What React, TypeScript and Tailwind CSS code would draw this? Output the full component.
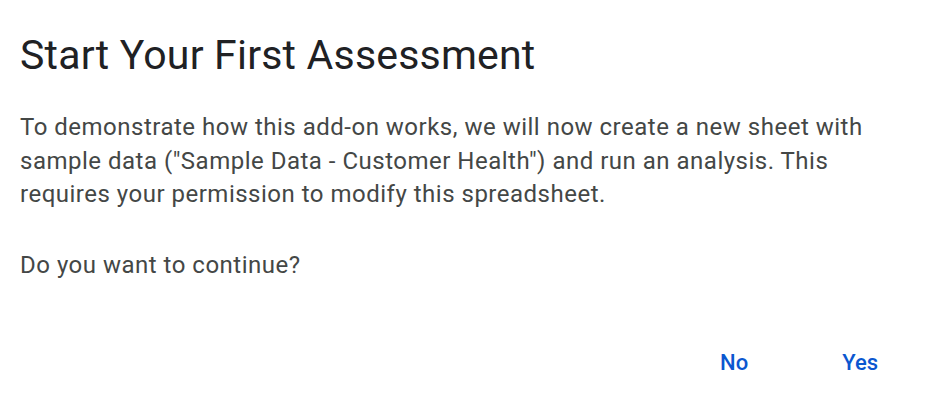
export default function App() {
  return (
    <div className="flex h-[415px] w-[930px] flex-col bg-white px-5 font-['Roboto',sans-serif]">
      <h1 className="mt-[29px] text-[41px] leading-[52px] font-normal tracking-[0.2px] text-[#202124]">
        Start Your First Assessment
      </h1>
      <div className="mt-[30px] text-[24px] leading-[33.5px] tracking-[0.5px] text-[#444746]">
        <p>
          To demonstrate how this add-on works, we will now create a new sheet with sample data ("Sample
          Data - Customer Health") and run an analysis. This requires your permission to modify this
          spreadsheet.
        </p>
        <p className="mt-[37px]">Do you want to continue?</p>
      </div>
      <div className="mt-auto mb-[36px] flex justify-end gap-[94px] pr-[32px]">
        <button type="button" className="text-[22px] font-medium text-[#0b57d0]">
          No
        </button>
        <button type="button" className="text-[22px] font-medium text-[#0b57d0]">
          Yes
        </button>
      </div>
    </div>
  )
}
